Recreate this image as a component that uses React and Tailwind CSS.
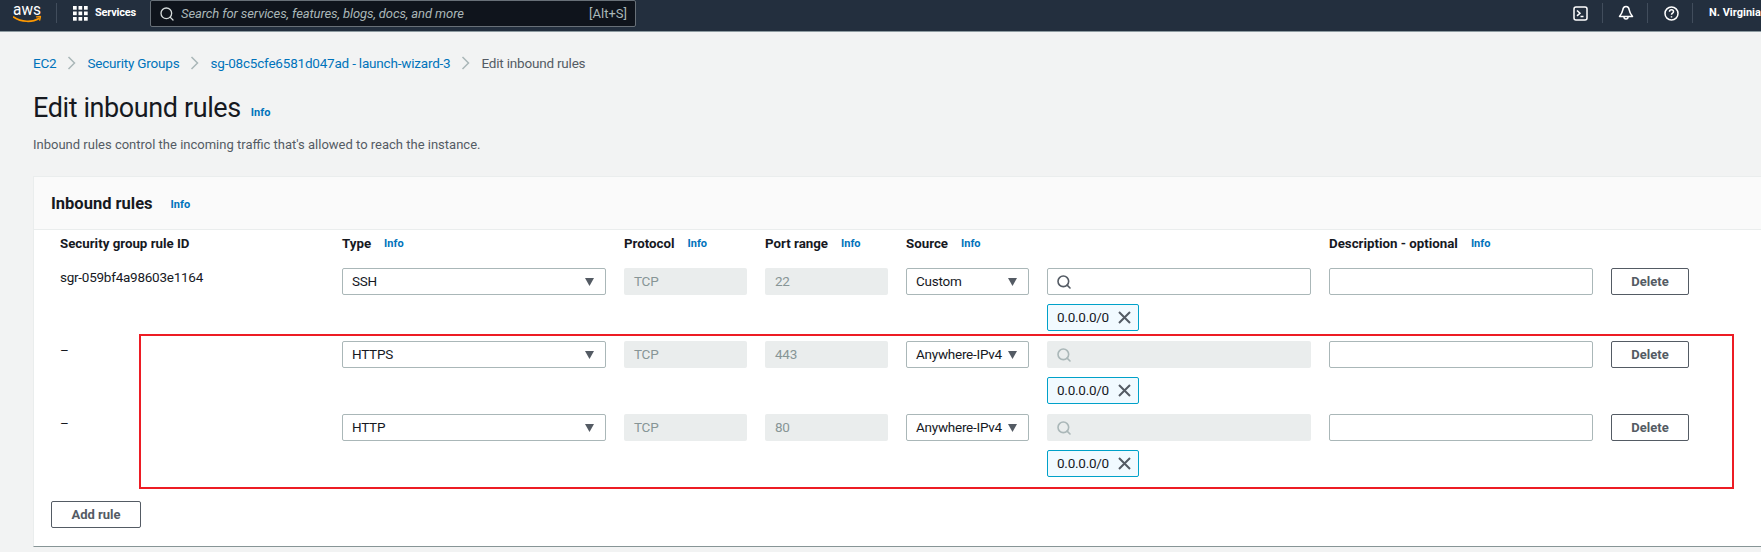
import { Search } from 'lucide-react';

const font = "font-['Roboto','Liberation_Sans',sans-serif]";
const columns = 'grid-cols-[264px_264px_123px_123px_123px_264px_264px_78px]';

function Info({ className = '' }) {
    return <span className={`text-[11px] font-bold text-[#0073bb] ${className}`}>Info</span>;
}

function AwsLogo() {
    return (
        <svg width="32" height="25" viewBox="0 0 32 25" fill="none">
            <text x="0" y="15" fill="#fff" fontSize="16.5" fontFamily="Roboto, sans-serif" textLength="28" lengthAdjust="spacingAndGlyphs">aws</text>
            <path d="M0.500 17c8 5.500 19 5.500 25.500 1.500" stroke="#ff9900" strokeWidth="1.600" strokeLinecap="round" />
            <path d="M23.500 16.800l4-.3-.8 3.700" stroke="#ff9900" strokeWidth="1.300" strokeLinecap="round" strokeLinejoin="round" />
        </svg>
    );
}

function GridIcon() {
    return (
        <svg width="15" height="15" viewBox="0 0 15 15" fill="#fff">
            {[0, 5.5, 11].map((y) =>
                [0, 5.5, 11].map((x) => <rect key={`${x}-${y}`} x={x} y={y} width="3.7" height="3.7" />)
            )}
        </svg>
    );
}

function Chevron() {
    return (
        <svg width="9" height="14" viewBox="0 0 9 14" fill="none" stroke="#aab7b8" strokeWidth="1.5">
            <path d="M1.500 1l6 6-6 6" />
        </svg>
    );
}

function Navbar() {
    return (
        <div className="flex h-[32px] items-start border-b border-[#8d9aa0] bg-[#232f3e] text-white">
            <div className="ml-[13px] w-[43px]">
                <AwsLogo />
            </div>
            <div className="mt-[3px] h-[20px] w-px bg-[#414d5c]" />
            <div className="ml-[16px] mt-[6px]">
                <GridIcon />
            </div>
            <span className="ml-[7px] mt-[3px] w-[55px] text-[11px] font-bold leading-[19px] tracking-[-0.2px]">Services</span>
            <div className="flex h-[27px] w-[486px] items-center rounded-[2px] border border-[#687078] bg-[#0f141c] pl-[8px] pr-[8px]">
                <Search size={16} className="text-[#d5dbdb]" strokeWidth={2} />
                <span className="ml-[6px] flex-1 text-[13px] italic tracking-[-0.1px] text-[#aab7b8]">Search for services, features, blogs, docs, and more</span>
                <span className="text-[13px] text-[#aab7b8]">[Alt+S]</span>
            </div>
            <div className="ml-auto flex h-[26px] items-center">
                <svg width="15" height="15" viewBox="0 0 15 15" fill="none" stroke="#fff" strokeWidth="1.5">
                    <rect x="1" y="1" width="13" height="13" rx="2" />
                    <path d="M4 4.500l3 2.700-3 2.700M7.500 10.500h3" />
                </svg>
                <div className="ml-[14px] mr-[15px] h-[20px] w-px bg-[#414d5c]" />
                <svg width="16" height="16" viewBox="0 0 16 16" fill="none" stroke="#fff" strokeWidth="1.5" strokeLinejoin="round">
                    <path d="M8 1.500c-2.200 0-3 1.500-3.200 3.400C4.500 7.500 3 9.500 1.500 11.500h13C13 9.500 11.500 7.500 11.200 4.900 11 3 10.200 1.500 8 1.500z" />
                    <path d="M6 12a2 2 0 0 0 4 0" />
                </svg>
                <div className="ml-[13px] mr-[16px] h-[20px] w-px bg-[#414d5c]" />
                <svg width="15" height="15" viewBox="0 0 15 15" fill="none" stroke="#fff" strokeWidth="1.500">
                    <circle cx="7.500" cy="7.500" r="6.500" />
                    <path d="M5.500 5.800c0-1.200.9-2 2-2s2 .8 2 1.900c0 1.500-2 1.500-2 3" />
                    <path d="M7.500 10.200v1.300" />
                </svg>
                <div className="ml-[13px] h-[20px] w-px bg-[#414d5c]" />
                <span className="ml-[16px] w-[52px] whitespace-nowrap text-[11px] font-bold">N. Virginia</span>
            </div>
        </div>
    );
}

function Caret() {
    return (
        <svg width="9" height="8" viewBox="0 0 9 8" fill="#545b64" className="shrink-0">
            <path d="M0 0h9L4.500 8z" />
        </svg>
    );
}

function SelectBox({ value }) {
    return (
        <div className="flex h-[27px] items-center justify-between rounded-[2px] border border-[#aab7b8] bg-white pl-[9px] pr-[11px] text-[13.5px] tracking-[-0.25px] text-[#16191f]">
            <span className="whitespace-nowrap">{value}</span>
            <Caret />
        </div>
    );
}

function DisabledInput({ value }) {
    return (
        <div className="flex h-[27px] items-center rounded-[2px] bg-[#eaeded] px-[10px] text-[13.5px] tracking-[-0.25px] text-[#879596]">{value}</div>
    );
}

function SearchInput({ disabled }) {
    return (
        <div className={`flex h-[27px] items-center rounded-[2px] ${disabled ? 'bg-[#eaeded] pl-[9px] text-[#aab7b8]' : 'border border-[#aab7b8] bg-white pl-[8px] text-[#545b64]'}`}>
            <Search size={16} strokeWidth={2.4} />
        </div>
    );
}

function Token() {
    return (
        <div className="flex h-[27px] w-[92px] items-center rounded-[2px] border border-[#00a1c9] bg-[#f1faff] pl-[9px] text-[13.5px] tracking-[-0.25px] text-[#16191f]">
            <span>0.0.0.0/0</span>
            <svg width="13" height="13" viewBox="0 0 13 13" fill="none" stroke="#545b64" strokeWidth="2" className="ml-[9px]">
                <path d="M1 1l11 11M12 1L1 12" />
            </svg>
        </div>
    );
}

function Button({ children, className = '' }) {
    return (
        <button className={`h-[27px] rounded-[2px] border border-[#545b64] bg-white text-[13px] font-bold text-[#545b64] ${className}`}>{children}</button>
    );
}

function Rule({ id, type, protocol = 'TCP', port, source, disabled }) {
    return (
        <div className={`grid ${columns} gap-x-[18px]`}>
            <div className="text-[13.5px] leading-[18px] tracking-[-0.25px] text-[#16191f]">{id}</div>
            <SelectBox value={type} />
            <DisabledInput value={protocol} />
            <DisabledInput value={port} />
            <SelectBox value={source} />
            <div className="flex flex-col gap-[9px]">
                <SearchInput disabled={disabled} />
                <Token />
            </div>
            <div className="h-[27px] rounded-[2px] border border-[#aab7b8] bg-white" />
            <Button>Delete</Button>
        </div>
    );
}

const headers = [
    ['Security group rule ID', false],
    ['Type', true],
    ['Protocol', true],
    ['Port range', true],
    ['Source', true],
    ['', false],
    ['Description - optional', true],
    ['', false],
];

export default function App() {
    return (
        <div className={`relative h-[552px] overflow-hidden bg-[#f2f3f3] ${font}`}>
            <Navbar />
            <div className="pl-[33px]">
                <div className="mt-[23px] flex h-[16px] items-center text-[13.5px] leading-[16px] tracking-[-0.2px]">
                    <span className="text-[#0073bb]">EC2</span>
                    <span className="mx-[11px]"><Chevron /></span>
                    <span className="text-[#0073bb]">Security Groups</span>
                    <span className="mx-[11px]"><Chevron /></span>
                    <span className="text-[#0073bb]">sg-08c5cfe6581d047ad - launch-wizard-3</span>
                    <span className="mx-[11px]"><Chevron /></span>
                    <span className="text-[#545b64]">Edit inbound rules</span>
                </div>
                <div className="mt-[20px] flex h-[34px] items-center">
                    <h1 className="text-[27px] font-normal leading-[34px] tracking-[-0.4px] text-[#16191f]">Edit inbound rules</h1>
                    <Info className="ml-[10px] mt-[10px]" />
                </div>
                <p className="mt-[11px] text-[13px] leading-[18px] text-[#545b64]">Inbound rules control the incoming traffic that's allowed to reach the instance.</p>

                <div className="mt-[22px] h-[371px] w-[1800px] border border-[#eaeded] border-b-[#879596] bg-white">
                    <div className="flex h-[53px] items-center border-b border-[#eaeded] bg-[#fafafa] pl-[17px] pt-[2px]">
                        <span className="text-[16.5px] font-bold text-[#16191f]">Inbound rules</span>
                        <Info className="ml-[18px] mt-[2px]" />
                    </div>
                    <div className="pl-[26px]">
                        <div className={`grid h-[27px] ${columns} items-center gap-x-[18px] pt-[1px]`}>
                            {headers.map(([label, info], i) => (
                                <div key={i} className="flex items-center">
                                    <span className="text-[13.3px] font-bold text-[#16191f]">{label}</span>
                                    {info && <Info className="ml-[13px]" />}
                                </div>
                            ))}
                        </div>
                        <div className="mt-[11px] flex flex-col gap-[10px]">
                            <Rule id="sgr-059bf4a98603e1164" type="SSH" port="22" source="Custom" />
                            <Rule id="–" type="HTTPS" port="443" source="Anywhere-IPv4" disabled />
                            <Rule id="–" type="HTTP" port="80" source="Anywhere-IPv4" disabled />
                        </div>
                    </div>
                    <Button className="ml-[17px] mt-[24px] w-[90px]">Add rule</Button>
                </div>
            </div>
            {/* red highlight drawn on top of the screenshot */}
            <div className="absolute left-[139px] top-[334px] h-[155px] w-[1595px] border-2 border-[#ed1c24]" />
        </div>
    );
}
